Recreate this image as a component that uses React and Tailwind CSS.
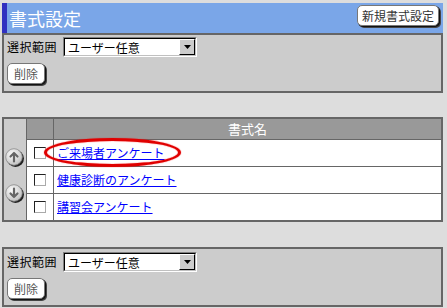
import React from "react";

function Select() {
  return (
    <div className="flex h-[20px] w-[134px] border border-t-[#808080] border-l-[#808080] border-b-white border-r-white">
      <div className="flex flex-1 border border-t-black border-l-black border-b-[#c0c0c0] border-r-[#c0c0c0] bg-white">
        <span className="flex-1 pl-[3px] text-[12px] leading-[17px] text-black">ユーザー任意</span>
        <div className="flex h-full w-[16px] items-center justify-center border border-t-white border-l-white border-b-black border-r-black bg-[#cccccc]">
          <svg width="7" height="4" viewBox="0 0 7 4">
            <polygon points="0,0 7,0 3.5,4" fill="#000" />
          </svg>
        </div>
      </div>
    </div>
  );
}

function Btn({ children, className = "" }) {
  return (
    <div
      className={
        "flex h-[21px] items-center justify-center whitespace-nowrap rounded-[5px] border border-[#777] bg-white text-[12px] leading-none shadow-[1px_1px_0_#111,2px_2px_0_#444] " +
        className
      }
    >
      {children}
    </div>
  );
}

function Controls() {
  return (
    <div className="flex flex-col gap-[6px]">
      <div className="flex items-center gap-[6px]">
        <span className="text-[12px] tracking-[0.5px] text-black">選択範囲</span>
        <Select />
      </div>
      <Btn className="w-[38px] text-[#555]">削除</Btn>
    </div>
  );
}

function Arrow({ down }) {
  return (
    <svg width="20" height="20" viewBox="0 0 20 20">
      <defs>
        <radialGradient id={down ? "gd" : "gu"} cx="0.4" cy="0.35" r="0.7">
          <stop offset="0" stopColor="#ffffff" />
          <stop offset="1" stopColor="#bdbdbd" />
        </radialGradient>
      </defs>
      <circle cx="10.5" cy="10.5" r="8.5" fill="#222" />
      <circle cx="9" cy="9" r="8.3" fill={`url(#${down ? "gd" : "gu"})`} stroke="#8a8a8a" strokeWidth="0.8" />
      {down ? (
        <path d="M9 4.5 V13 M5.5 9.5 L9 13 L12.5 9.5" stroke="#666" strokeWidth="2.2" fill="none" strokeLinecap="round" strokeLinejoin="round" />
      ) : (
        <path d="M9 13.5 V5 M5.5 8.5 L9 5 L12.5 8.5" stroke="#666" strokeWidth="2.2" fill="none" strokeLinecap="round" strokeLinejoin="round" />
      )}
    </svg>
  );
}

function Check() {
  return (
    <div className="h-[12px] w-[12px] border border-t-[#222] border-l-[#222] border-b-[#aaa] border-r-[#aaa] bg-white" />
  );
}

const rows = ["ご来場者アンケート", "健康診断のアンケート", "講習会アンケート"];

export default function App() {
  return (
    <div className="h-[308px] w-[447px] overflow-hidden bg-[#dddddd] pl-[2px] pt-[3px] font-['Noto_Sans_CJK_JP',sans-serif]">
      <div className="w-[441px]">
        {/* header */}
        <div className="flex h-[30px] items-center justify-between border-l-[5px] border-[#3030c0] bg-[#7aa6e8] pl-[2px] pr-[4px]">
          <span className="text-[18px] leading-none text-white">書式設定</span>
          <Btn className="-mt-[5px] w-[82px] text-[#333]">新規書式設定</Btn>
        </div>
        {/* panel 1 */}
        <div className="h-[60px] border-2 border-[#666] bg-[#cccccc] pl-[3px] pt-[2px]">
          <Controls />
        </div>

        {/* table */}
        <div className="relative mt-[24px] flex border-2 border-[#666]">
          <div className="flex w-[23px] flex-col items-center gap-[16px] border-r border-[#666] bg-[#cccccc] pt-[29px]">
            <Arrow />
            <Arrow down />
          </div>
          <div className="flex flex-1 flex-col">
            <div className="flex h-[20px] bg-[#999999]">
              <div className="w-[27px] border-r border-[#666]" />
              <div className="flex flex-1 items-center justify-center text-[13px] text-white">書式名</div>
            </div>
            {rows.map((r) => (
              <div key={r} className="flex h-[27px] border-t border-[#666] bg-white">
                <div className="flex w-[27px] items-center justify-center border-r border-[#666]">
                  <Check />
                </div>
                <div className="flex flex-1 items-center pl-[3px]">
                  <a href="#" className="text-[12px] text-[#0000ff] underline">
                    {r}
                  </a>
                </div>
              </div>
            ))}
          </div>
          <div className="absolute left-[40px] top-[19px] h-[29px] w-[137px] rounded-[50%] border-[3px] border-[#e00000] shadow-[0_0_1px_#f00,inset_0_0_1px_#f00]" />
        </div>

        {/* panel 2 */}
        <div className="mt-[25px] h-[60px] border-2 border-[#666] bg-[#cccccc] pl-[3px] pt-[3px]">
          <Controls />
        </div>
      </div>
    </div>
  );
}
